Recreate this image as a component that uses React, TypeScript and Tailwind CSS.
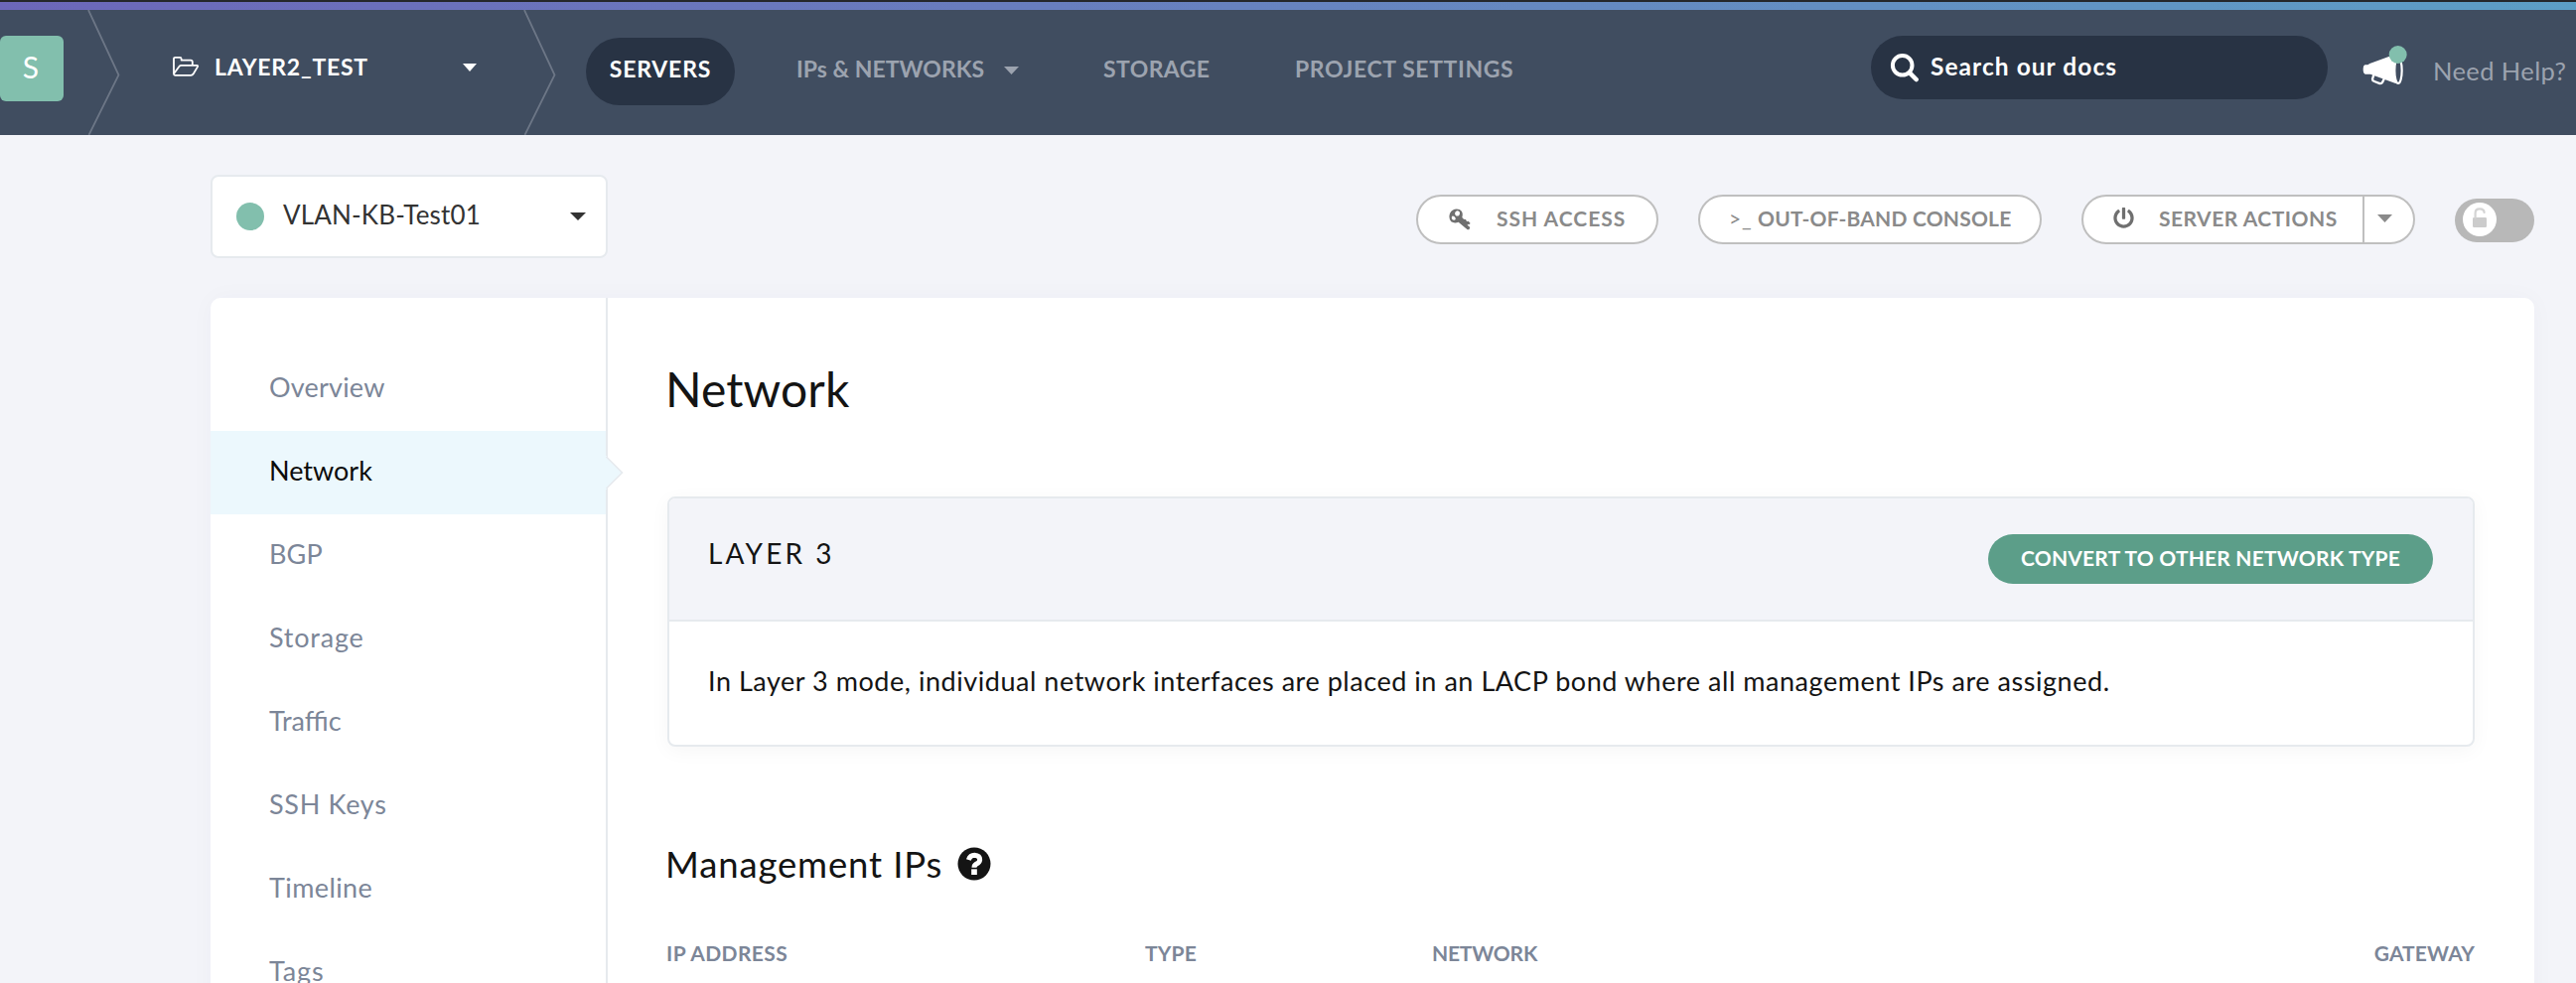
import React from "react";
import { FaPowerOff } from "react-icons/fa";

function Caret({ className }: { className: string }) {
  return (
    <svg viewBox="0 0 16 8" preserveAspectRatio="none" className={className} fill="currentColor">
      <path d="M0 0H16L8 8Z" />
    </svg>
  );
}

function Separator() {
  return (
    <svg width="33" height="126" viewBox="0 0 33 126" className="shrink-0" fill="none" stroke="#6c7686" strokeWidth="1.8">
      <path d="M1 0L31.5 65.5L1.5 126" />
    </svg>
  );
}

function FolderIcon() {
  return (
    <svg width="28" height="22" viewBox="0 0 28 22" className="shrink-0" fill="none" stroke="#fff" strokeWidth="1.8" strokeLinejoin="round">
      <path d="M2 18V3.2Q2 1.8 3.4 1.8H8.2Q9.6 1.8 9.6 3.2V4.6H19Q20.8 4.6 20.8 6.2V9.8" />
      <path d="M2 18.2L7.4 11Q8.2 9.9 9.6 9.9H25.2Q26.8 9.9 25.9 11.4L21.8 18.2Q20.8 19.8 19.2 19.8H3.6Q2 19.8 2 18" />
    </svg>
  );
}

function SearchIcon() {
  return (
    <svg width="30" height="30" viewBox="0 0 30 30" className="shrink-0" fill="none" stroke="#fff">
      <circle cx="12.7" cy="12.8" r="9.8" strokeWidth="4" />
      <path d="M20 20.3L26.6 27" strokeWidth="4.6" strokeLinecap="round" />
    </svg>
  );
}

function MegaphoneIcon() {
  return (
    <svg width="46" height="42" viewBox="28 45 138 126" className="shrink-0">
      <path d="M36 106L44 106L50 102L126 74L136 163L128 162L52 134L36 134Q30 132 30 120Q30 107 36 106Z" fill="#fff" />
      <path d="M62 136L58 149Q58 154 64 156L80 162Q86 163 88 159L94 147" fill="none" stroke="#fff" strokeWidth="7" />
      <ellipse cx="136" cy="123" rx="11" ry="39" fill="#404d60" stroke="#fff" strokeWidth="6.5" />
      <circle cx="135" cy="75" r="27" fill="#82bfad" />
    </svg>
  );
}

function KeyIcon() {
  return (
    <svg width="22" height="22" viewBox="55 58 66 66" className="shrink-0">
      <path
        fillRule="evenodd"
        fill="#6f6f6f"
        d="M66 63Q76 57 87 61Q98 67 96 80L95 85L100 90L106 91L109 97L114 96L120 103L115 107L112 105L111 108L119 115L116 122L111 122L84 99Q72 104 62 98Q53 88 58 73Q61 66 66 63ZM76 67Q71 72 75 78Q80 83 86 78Q90 72 86 67Q81 63 76 67ZM65 81Q61 86 66 92Q71 95 75 91Q76 87 72 83Q68 80 65 81Z"
      />
    </svg>
  );
}

function LockOpenIcon() {
  return (
    <svg width="14" height="20" viewBox="0 0 14 20">
      <rect x="0" y="10" width="14" height="10" rx="1.2" fill="#cccccc" />
      <path d="M2.6 10.5V5.4Q2.6 1.4 7 1.4Q11.4 1.4 11.6 5" fill="none" stroke="#d4d4d4" strokeWidth="2.2" strokeLinecap="round" />
    </svg>
  );
}

function HelpIcon() {
  return (
    <svg width="34" height="34" viewBox="133 70 102 102" className="shrink-0">
      <circle cx="184" cy="121" r="49.5" fill="#141414" />
      <path d="M167 109Q172 95 185 95Q201 96 201 109Q200 117 191 121Q184 125 184 132" fill="none" stroke="#fff" strokeWidth="15" />
      <rect x="175.500" y="137" width="17" height="17" fill="#fff" />
    </svg>
  );
}

const menu = [
  { label: "Overview", spacing: "tracking-[0.2px]" },
  { label: "Network", spacing: "tracking-[0px]", active: true },
  { label: "BGP", spacing: "tracking-[0.1px]" },
  { label: "Storage", spacing: "tracking-[0.8px]" },
  { label: "Traffic", spacing: "tracking-[0px]" },
  { label: "SSH Keys", spacing: "tracking-[0.7px]" },
  { label: "Timeline", spacing: "tracking-[0.4px]" },
  { label: "Tags", spacing: "tracking-[0.9px]" },
];

function Header() {
  return (
    <header className="flex h-[126px] shrink-0 items-start bg-[#404d60] text-[23px] leading-[28px] font-bold whitespace-nowrap">
      <div className="mt-[26px] flex h-[66px] w-16 shrink-0 justify-center rounded-md bg-[#82bfad] pt-[13px] text-[30px] leading-[36px] font-normal text-white">
        <span className="mr-0.5">S</span>
      </div>
      <div className="w-6 shrink-0" />
      <Separator />
      <button className="flex h-[114px] w-[406px] shrink-0 items-center pl-[52px] text-white">
        <FolderIcon />
        <span className="w-[265px] shrink-0 pl-[15px] text-left tracking-[0.75px]">LAYER2_TEST</span>
        <Caret className="mt-0.5 h-2 w-[14px] shrink-0" />
      </button>
      <Separator />
      <nav className="ml-[30px] flex text-[#9ca3af]">
        <a className="mt-7 flex h-[68px] w-[150px] justify-center rounded-[34px] bg-[#283344] pt-[17px] tracking-[0.8px] text-white">
          SERVERS
        </a>
        <a className="ml-[62px] mt-[45px] flex h-7 w-[309px] items-center">
          <span className="w-[209px]">IPs &amp; NETWORKS</span>
          <Caret className="mt-1 h-2 w-[15px]" />
        </a>
        <a className="mt-[45px] w-[193px] tracking-[0.4px]">STORAGE</a>
        <a className="mt-[45px] tracking-[0.6px]">PROJECT SETTINGS</a>
      </nav>
      <div className="ml-auto mt-[26px] flex h-16 w-[460px] items-center rounded-[32px] bg-[#283344] pl-[19px] text-[24.5px] text-white">
        <SearchIcon />
        <span className="-mt-0.5 pl-[11px] tracking-[1.05px]">Search our docs</span>
      </div>
      <div className="ml-[35px] mt-[35px] flex w-[215px] items-start">
        <MegaphoneIcon />
        <span className="ml-[25px] mt-[12px] text-[25.5px] font-normal text-[#9ca3af] tracking-[0.4px]">Need Help?</span>
      </div>
    </header>
  );
}

const pill = "flex h-[50px] shrink-0 items-center border-2 border-[#bfbfbf] bg-white rounded-[25px]";

function Toolbar() {
  return (
    <div className="flex h-[164px] shrink-0 items-start pt-10 pr-[42px] pl-[212px] whitespace-nowrap">
      <button className="flex h-[84px] w-[400px] items-center rounded-lg border-2 border-[#e6eaee] bg-white pl-6 text-[26px] text-[#333]">
        <span className="size-7 rounded-full bg-[#82bfad]" />
        <span className="-mt-1 w-[308px] pl-[19px] text-left tracking-[0.15px]">VLAN-KB-Test01</span>
        <Caret className="h-2 w-4" />
      </button>
      <div className="mt-5 ml-auto flex text-[21px] leading-[24px] font-bold text-[#8a8a8a]">
        <button className={pill + " w-[244px] pl-[31px]"}>
          <KeyIcon />
          <span className="-mt-0.5 pl-[26px] tracking-[1px]">SSH ACCESS</span>
        </button>
        <button className={pill + " ml-10 w-[346px] pl-[29px]"}>
          <span className="-mt-0.5 w-[29px] text-left font-normal tracking-[0.9px]">&gt;_</span>
          <span className="-mt-0.5 tracking-[0.2px]">OUT-OF-BAND CONSOLE</span>
        </button>
        <button className={pill + " ml-10 w-[336px] pl-[30px]"}>
          <FaPowerOff className="-mt-1 size-[21px] shrink-0 text-[#6f6f6f]" />
          <span className="-mt-0.5 w-[230px] shrink-0 pl-[25px] text-left tracking-[0.5px]">SERVER ACTIONS</span>
          <span className="flex h-full w-[51px] shrink-0 items-center justify-start border-l-2 border-[#bfbfbf] pl-[13px]">
            <Caret className="-mt-0.5 h-2 w-[15px]" />
          </span>
        </button>
        <div className="mt-1 ml-10 h-11 w-20 rounded-[22px] bg-[#b8b8b8] pt-1 pl-2">
          <div className="flex size-[34px] items-center justify-center rounded-full bg-white pb-1">
            <LockOpenIcon />
          </div>
        </div>
      </div>
    </div>
  );
}

function Sidebar() {
  return (
    <aside className="w-[400px] shrink-0 border-r-2 border-[#e6eaee] pt-[50px]">
      {menu.map((item) => (
        <a
          key={item.label}
          className={
            "relative flex h-[84px] items-center pb-1 pl-[59px] text-[27px] " +
            item.spacing +
            (item.active ? " bg-[#ecf8fd] text-[#0c0c0c]" : " text-[#7c8698]")
          }
        >
          {item.label}
          {item.active && (
            <svg width="19" height="34" viewBox="0 0 19 34" className="absolute top-[25px] -right-[18px]">
              <path d="M0 0H2V1L17.500 17L2 33V34H0Z" fill="#ecf8fd" />
              <path d="M1.500 1L17.500 17L1.500 33" fill="none" stroke="#e6eaee" strokeWidth="1.600" />
            </svg>
          )}
        </a>
      ))}
    </aside>
  );
}

export default function App() {
  return (
    <div className="flex h-[990px] w-full flex-col overflow-hidden bg-[#f3f4f9] font-['Lato',sans-serif]">
      <div className="h-0.5 shrink-0 bg-[#25272b]" />
      <div className="h-2 shrink-0 bg-linear-to-r from-[#6c67b9] to-[#5c9ec5]" />
      <Header />
      <Toolbar />
      <div className="mr-[42px] ml-[212px] flex flex-1 rounded-t-[10px] bg-white shadow-[0_0_24px_rgba(40,60,90,0.03)]">
        <Sidebar />
        <main className="flex-1 pr-[60px] pl-[60px] whitespace-nowrap text-[#141414]">
          <h1 className="-ml-0.5 pt-[63px] text-[48px] leading-[58px] tracking-[0.1px]">Network</h1>
          <section className="mt-[79px] h-[252px] overflow-hidden rounded-lg border-2 border-[#e6eaee] bg-white shadow-[0_4px_20px_rgba(0,0,0,0.04)]">
            <div className="flex h-[124px] items-start justify-between border-b-2 border-[#e6eaee] bg-[#f3f4f9] pr-10 pl-[39px]">
              <h2 className="mt-[38px] text-[28px] leading-[34px] tracking-[3.1px]">LAYER 3</h2>
              <button className="mt-9 flex h-[50px] w-[448px] justify-center rounded-[25px] bg-[#5c9e89] pt-[11px] text-[21px] leading-[26px] font-bold tracking-[0.2px] text-white">
                CONVERT TO OTHER NETWORK TYPE
              </button>
            </div>
            <p className="pt-[43px] pl-[39px] text-[27px] leading-[34px] tracking-[0.54px]">
              In Layer 3 mode, individual network interfaces are placed in an LACP bond where all management IPs are assigned.
            </p>
          </section>
          <div className="mt-[95px] flex h-[46px] items-center">
            <h2 className="-ml-0.5 w-[294px] text-[36.5px] tracking-[0.85px]">Management IPs</h2>
            <HelpIcon />
          </div>
          <div className="mt-[54px] -ml-px flex text-[21px] leading-[26px] font-bold text-[#7c8698]">
            <div className="w-[482px] tracking-[0.4px]">IP ADDRESS</div>
            <div className="w-[289px] tracking-[0.2px]">TYPE</div>
            <div className="flex-1 tracking-[-0.2px]">NETWORK</div>
            <div className="tracking-[0.1px]">GATEWAY</div>
          </div>
        </main>
      </div>
    </div>
  );
}
